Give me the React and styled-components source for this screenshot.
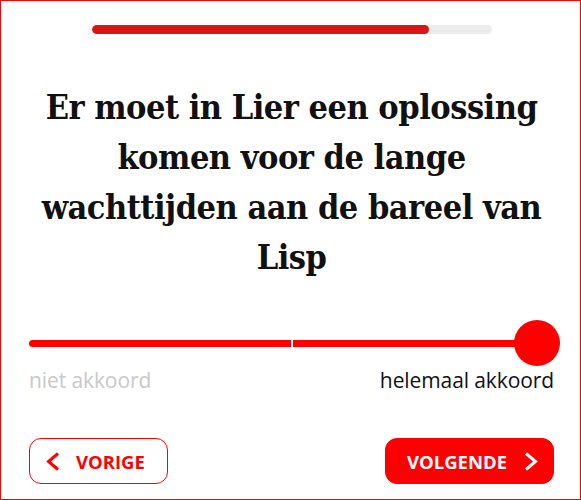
import React, { useState } from "react";
import styled, { createGlobalStyle } from "styled-components";

const GlobalStyle = createGlobalStyle`
  html, body {
    margin: 0;
    padding: 0;
    background: #fff;
  }
  * {
    box-sizing: border-box;
  }
`;

const Frame = styled.div`
  width: 581px;
  height: 500px;
  border: 1px solid #ff0000;
  display: flex;
  flex-direction: column;
  align-items: stretch;
  padding: 24px 26px 0 28px;
  font-family: "Open Sans", "Liberation Sans", sans-serif;
`;

const Progress = styled.div`
  align-self: center;
  width: 400px;
  height: 9px;
  border-radius: 5px;
  background: #ececec;
  overflow: hidden;
`;

const ProgressFill = styled.div`
  height: 100%;
  border-radius: 5px;
  background: #d91515;
`;

const Statement = styled.h1`
  margin: 48px 0 0;
  text-align: center;
  font-family: "DejaVu Serif Condensed", "DejaVu Serif", serif;
  font-stretch: condensed;
  font-weight: 700;
  font-size: 34px;
  line-height: 50px;
  letter-spacing: -0.5px;
  color: #111;
`;

const SliderWrap = styled.div`
  margin-top: 38px;
  position: relative;
  height: 46px;
  display: flex;
  align-items: center;
`;

const Track = styled.div`
  flex: 1;
  display: flex;
  gap: 2px;
  height: 7px;
`;

const TrackHalf = styled.div`
  flex: 1;
  background: #ff0000;
  border-radius: ${(p) => (p.$first ? "4px 0 0 4px" : "0")};
`;

const Thumb = styled.div`
  position: absolute;
  right: ${(p) => p.$right}px;
  top: 0;
  width: 46px;
  height: 46px;
  border-radius: 50%;
  background: #ff0000;
`;

const Labels = styled.div`
  display: flex;
  justify-content: space-between;
  margin-top: 1px;
  font-size: 21px;
  line-height: 26px;
  letter-spacing: -0.1px;
`;

const Label = styled.span`
  color: ${(p) => (p.$active ? "#111" : "#c8c8c8")};
`;

const Nav = styled.div`
  margin-top: 45px;
  display: flex;
  justify-content: space-between;
`;

const NavButton = styled.button`
  height: 46px;
  display: flex;
  align-items: center;
  gap: ${(p) => (p.$primary ? "16px" : "15px")};
  padding: 0;
  padding-left: ${(p) => (p.$primary ? "21px" : "15px")};
  width: ${(p) => (p.$primary ? "169px" : "139px")};
  border-radius: 12px;
  border: 1px solid #ff0000;
  background: ${(p) => (p.$primary ? "#ff0000" : "#fff")};
  color: ${(p) => (p.$primary ? "#fff" : "#ff0000")};
  font-family: "Open Sans", "Liberation Sans", sans-serif;
  font-weight: 700;
  font-size: 18.5px;
  letter-spacing: 0;
  cursor: pointer;
`;

const Chevron = ({ dir }) => (
  <svg width="16" height="21" viewBox="0 0 16 21" fill="none">
    <polyline
      points={dir === "left" ? "13,2.5 3.5,10.5 13,18.5" : "3,2.5 12.5,10.5 3,18.5"}
      stroke="currentColor"
      strokeWidth="3"
    />
  </svg>
);

export default function App() {
  const [value] = useState(1);
  return (
    <>
      <GlobalStyle />
      <Frame>
        <Progress>
          <ProgressFill style={{ width: `${(5 / 6) * 100 + 1}%` }} />
        </Progress>
        <Statement>
          Er moet in Lier een oplossing komen voor de lange wachttijden aan de
          bareel van Lisp
        </Statement>
        <SliderWrap>
          <Track>
            <TrackHalf $first />
            <TrackHalf />
          </Track>
          <Thumb $right={value === 1 ? -6 : 0} />
        </SliderWrap>
        <Labels>
          <Label>niet akkoord</Label>
          <Label $active>helemaal akkoord</Label>
        </Labels>
        <Nav>
          <NavButton>
            <Chevron dir="left" />
            VORIGE
          </NavButton>
          <NavButton $primary>
            VOLGENDE
            <Chevron dir="right" />
          </NavButton>
        </Nav>
      </Frame>
    </>
  );
}
